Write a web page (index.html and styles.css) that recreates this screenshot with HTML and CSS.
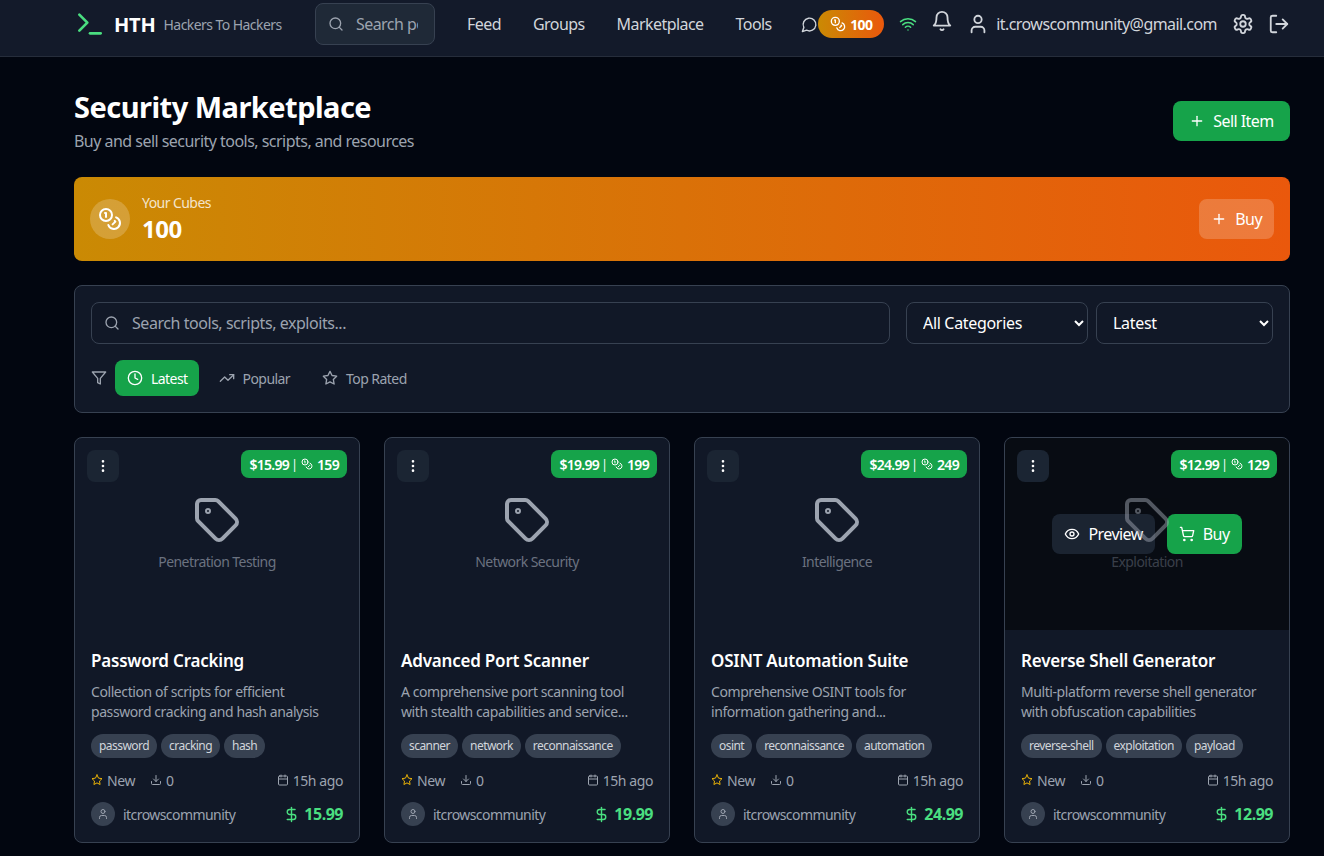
FILE: index.html
```html
<!DOCTYPE html>
<html lang="en">
<head>
    <meta charset="UTF-8">
    <meta name="viewport" content="width=device-width, initial-scale=1.0">
    <title>Security Marketplace - HTH</title>
    <link rel="stylesheet" href="styles.css">
</head>
<body>
    <!-- icon sprite -->
    <svg class="sprite" xmlns="http://www.w3.org/2000/svg">
        <symbol id="i-terminal" viewBox="0 0 24 24"><polyline points="4 17 10 11 4 5"/><line x1="12" y1="19" x2="20" y2="19"/></symbol>
        <symbol id="i-search" viewBox="0 0 24 24"><circle cx="11" cy="11" r="8"/><path d="m21 21-4.3-4.3"/></symbol>
        <symbol id="i-chat" viewBox="0 0 24 24"><path d="M7.9 20A9 9 0 1 0 4 16.1L2 22Z"/></symbol>
        <symbol id="i-coins" viewBox="0 0 24 24"><circle cx="8" cy="8" r="6"/><path d="M18.09 10.37A6 6 0 1 1 10.34 18"/><path d="M7 6h1v4"/><path d="m16.71 13.88.7.71-2.82 2.82"/></symbol>
        <symbol id="i-wifi" viewBox="0 0 24 24"><path d="M12 20h.01"/><path d="M2 8.82a15 15 0 0 1 20 0"/><path d="M5 12.859a10 10 0 0 1 14 0"/><path d="M8.5 16.429a5 5 0 0 1 7 0"/></symbol>
        <symbol id="i-bell" viewBox="0 0 24 24"><path d="M6 8a6 6 0 0 1 12 0c0 7 3 9 3 9H3s3-2 3-9"/><path d="M10.3 21a1.94 1.94 0 0 0 3.4 0"/></symbol>
        <symbol id="i-user" viewBox="0 0 24 24"><path d="M19 21v-2a4 4 0 0 0-4-4H9a4 4 0 0 0-4 4v2"/><circle cx="12" cy="7" r="4"/></symbol>
        <symbol id="i-settings" viewBox="0 0 24 24"><path d="M12.22 2h-.44a2 2 0 0 0-2 2v.18a2 2 0 0 1-1 1.73l-.43.25a2 2 0 0 1-2 0l-.15-.08a2 2 0 0 0-2.73.73l-.22.38a2 2 0 0 0 .73 2.73l.15.1a2 2 0 0 1 1 1.72v.51a2 2 0 0 1-1 1.74l-.15.09a2 2 0 0 0-.73 2.73l.22.38a2 2 0 0 0 2.73.73l.15-.08a2 2 0 0 1 2 0l.43.25a2 2 0 0 1 1 1.73V20a2 2 0 0 0 2 2h.44a2 2 0 0 0 2-2v-.18a2 2 0 0 1 1-1.73l.43-.25a2 2 0 0 1 2 0l.15.08a2 2 0 0 0 2.73-.73l.22-.39a2 2 0 0 0-.73-2.73l-.15-.08a2 2 0 0 1-1-1.74v-.5a2 2 0 0 1 1-1.74l.15-.09a2 2 0 0 0 .73-2.73l-.22-.38a2 2 0 0 0-2.73-.73l-.15.08a2 2 0 0 1-2 0l-.43-.25a2 2 0 0 1-1-1.73V4a2 2 0 0 0-2-2z"/><circle cx="12" cy="12" r="3"/></symbol>
        <symbol id="i-logout" viewBox="0 0 24 24"><path d="M9 21H5a2 2 0 0 1-2-2V5a2 2 0 0 1 2-2h4"/><polyline points="16 17 21 12 16 7"/><line x1="21" y1="12" x2="9" y2="12"/></symbol>
        <symbol id="i-plus" viewBox="0 0 24 24"><path d="M5 12h14"/><path d="M12 5v14"/></symbol>
        <symbol id="i-filter" viewBox="0 0 24 24"><polygon points="22 3 2 3 10 12.46 10 19 14 21 14 12.46 22 3"/></symbol>
        <symbol id="i-clock" viewBox="0 0 24 24"><circle cx="12" cy="12" r="10"/><polyline points="12 6 12 12 16 14"/></symbol>
        <symbol id="i-trending" viewBox="0 0 24 24"><polyline points="22 7 13.5 15.5 8.5 10.5 2 17"/><polyline points="16 7 22 7 22 13"/></symbol>
        <symbol id="i-star" viewBox="0 0 24 24"><polygon points="12 2 15.09 8.26 22 9.27 17 14.14 18.18 21.02 12 17.77 5.82 21.02 7 14.14 2 9.27 8.91 8.26 12 2"/></symbol>
        <symbol id="i-more" viewBox="0 0 24 24"><circle cx="12" cy="12" r="1"/><circle cx="12" cy="5" r="1"/><circle cx="12" cy="19" r="1"/></symbol>
        <symbol id="i-tag" viewBox="0 0 24 24"><path d="M12.586 2.586A2 2 0 0 0 11.172 2H4a2 2 0 0 0-2 2v7.172a2 2 0 0 0 .586 1.414l8.704 8.704a2.426 2.426 0 0 0 3.42 0l6.58-6.58a2.426 2.426 0 0 0 0-3.42z"/><circle cx="7.5" cy="7.5" r=".5"/></symbol>
        <symbol id="i-eye" viewBox="0 0 24 24"><path d="M2 12s3-7 10-7 10 7 10 7-3 7-10 7-10-7-10-7Z"/><circle cx="12" cy="12" r="3"/></symbol>
        <symbol id="i-cart" viewBox="0 0 24 24"><circle cx="8" cy="21" r="1"/><circle cx="19" cy="21" r="1"/><path d="M2.05 2.05h2l2.66 12.42a2 2 0 0 0 2 1.58h9.78a2 2 0 0 0 1.95-1.57l1.65-7.43H5.12"/></symbol>
        <symbol id="i-download" viewBox="0 0 24 24"><path d="M21 15v4a2 2 0 0 1-2 2H5a2 2 0 0 1-2-2v-4"/><polyline points="7 10 12 15 17 10"/><line x1="12" y1="15" x2="12" y2="3"/></symbol>
        <symbol id="i-calendar" viewBox="0 0 24 24"><path d="M8 2v4"/><path d="M16 2v4"/><rect x="3" y="4" width="18" height="18" rx="2"/><path d="M3 10h18"/></symbol>
        <symbol id="i-dollar" viewBox="0 0 24 24"><line x1="12" y1="2" x2="12" y2="22"/><path d="M17 5H9.5a3.5 3.5 0 0 0 0 7h5a3.5 3.5 0 0 1 0 7H6"/></symbol>
    </svg>

    <header class="topbar">
        <a class="logo" href="#">
            <svg class="icon logo-icon"><use href="#i-terminal"/></svg>
            <span class="logo-name">HTH</span>
            <span class="logo-sub">Hackers To Hackers</span>
        </a>
        <div class="top-search">
            <svg class="icon icon-16"><use href="#i-search"/></svg>
            <input type="text" placeholder="Search posts...">
        </div>
        <nav class="nav-links">
            <a href="#">Feed</a>
            <a href="#">Groups</a>
            <a href="#">Marketplace</a>
            <a href="#">Tools</a>
        </nav>
        <div class="top-actions">
            <svg class="icon icon-chat"><use href="#i-chat"/></svg>
            <span class="cube-pill"><svg class="icon icon-16"><use href="#i-coins"/></svg>100</span>
            <svg class="icon icon-wifi"><use href="#i-wifi"/></svg>
            <svg class="icon icon-bell"><use href="#i-bell"/></svg>
            <span class="top-user"><svg class="icon icon-user"><use href="#i-user"/></svg>it.crowscommunity@gmail.com</span>
            <svg class="icon icon-gear"><use href="#i-settings"/></svg>
            <svg class="icon icon-exit"><use href="#i-logout"/></svg>
        </div>
    </header>

    <main class="container">
        <div class="page-head">
            <div>
                <h1>Security Marketplace</h1>
                <p>Buy and sell security tools, scripts, and resources</p>
            </div>
            <button class="btn btn-green btn-sell"><svg class="icon icon-16"><use href="#i-plus"/></svg>Sell Item</button>
        </div>

        <section class="cubes">
            <div class="cubes-left">
                <span class="cubes-circle"><svg class="icon icon-24"><use href="#i-coins"/></svg></span>
                <div>
                    <div class="cubes-label">Your Cubes</div>
                    <div class="cubes-count">100</div>
                </div>
            </div>
            <button class="btn btn-glass"><svg class="icon icon-16"><use href="#i-plus"/></svg>Buy</button>
        </section>

        <section class="filters">
            <div class="filter-row">
                <div class="filter-search">
                    <svg class="icon icon-16"><use href="#i-search"/></svg>
                    <input type="text" placeholder="Search tools, scripts, exploits...">
                </div>
                <select class="select-cat"><option>All Categories</option></select>
                <select class="select-sort"><option>Latest</option></select>
            </div>
            <div class="tab-row">
                <svg class="icon icon-filter"><use href="#i-filter"/></svg>
                <button class="tab active"><svg class="icon icon-16"><use href="#i-clock"/></svg>Latest</button>
                <button class="tab"><svg class="icon icon-16"><use href="#i-trending"/></svg>Popular</button>
                <button class="tab"><svg class="icon icon-16"><use href="#i-star"/></svg>Top Rated</button>
            </div>
        </section>

        <section class="grid">
            <article class="card">
                <div class="thumb">
                    <button class="menu-btn"><svg class="icon icon-16"><use href="#i-more"/></svg></button>
                    <span class="price-badge">$15.99 <i>|</i> <svg class="icon icon-12"><use href="#i-coins"/></svg> 159</span>
                    <svg class="icon tag-icon"><use href="#i-tag"/></svg>
                    <span class="thumb-label">Penetration Testing</span>
                </div>
                <div class="card-body">
                    <h3>Password Cracking</h3>
                    <p class="desc">Collection of scripts for efficient password cracking and hash analysis</p>
                    <div class="tags"><span>password</span><span>cracking</span><span>hash</span></div>
                    <div class="meta">
                        <span class="meta-new"><svg class="icon icon-star"><use href="#i-star"/></svg>New</span>
                        <span class="meta-dl"><svg class="icon icon-12"><use href="#i-download"/></svg>0</span>
                        <span class="meta-time"><svg class="icon icon-12"><use href="#i-calendar"/></svg>15h ago</span>
                    </div>
                    <div class="seller">
                        <span class="avatar"><svg class="icon icon-12"><use href="#i-user"/></svg></span>
                        <span class="seller-name">itcrowscommunity</span>
                        <span class="price"><svg class="icon icon-dollar"><use href="#i-dollar"/></svg>15.99</span>
                    </div>
                </div>
            </article>

            <article class="card">
                <div class="thumb">
                    <button class="menu-btn"><svg class="icon icon-16"><use href="#i-more"/></svg></button>
                    <span class="price-badge">$19.99 <i>|</i> <svg class="icon icon-12"><use href="#i-coins"/></svg> 199</span>
                    <svg class="icon tag-icon"><use href="#i-tag"/></svg>
                    <span class="thumb-label">Network Security</span>
                </div>
                <div class="card-body">
                    <h3>Advanced Port Scanner</h3>
                    <p class="desc">A comprehensive port scanning tool with stealth capabilities and service...</p>
                    <div class="tags"><span>scanner</span><span>network</span><span>reconnaissance</span></div>
                    <div class="meta">
                        <span class="meta-new"><svg class="icon icon-star"><use href="#i-star"/></svg>New</span>
                        <span class="meta-dl"><svg class="icon icon-12"><use href="#i-download"/></svg>0</span>
                        <span class="meta-time"><svg class="icon icon-12"><use href="#i-calendar"/></svg>15h ago</span>
                    </div>
                    <div class="seller">
                        <span class="avatar"><svg class="icon icon-12"><use href="#i-user"/></svg></span>
                        <span class="seller-name">itcrowscommunity</span>
                        <span class="price"><svg class="icon icon-dollar"><use href="#i-dollar"/></svg>19.99</span>
                    </div>
                </div>
            </article>

            <article class="card">
                <div class="thumb">
                    <button class="menu-btn"><svg class="icon icon-16"><use href="#i-more"/></svg></button>
                    <span class="price-badge">$24.99 <i>|</i> <svg class="icon icon-12"><use href="#i-coins"/></svg> 249</span>
                    <svg class="icon tag-icon"><use href="#i-tag"/></svg>
                    <span class="thumb-label">Intelligence</span>
                </div>
                <div class="card-body">
                    <h3>OSINT Automation Suite</h3>
                    <p class="desc">Comprehensive OSINT tools for information gathering and...</p>
                    <div class="tags"><span>osint</span><span>reconnaissance</span><span>automation</span></div>
                    <div class="meta">
                        <span class="meta-new"><svg class="icon icon-star"><use href="#i-star"/></svg>New</span>
                        <span class="meta-dl"><svg class="icon icon-12"><use href="#i-download"/></svg>0</span>
                        <span class="meta-time"><svg class="icon icon-12"><use href="#i-calendar"/></svg>15h ago</span>
                    </div>
                    <div class="seller">
                        <span class="avatar"><svg class="icon icon-12"><use href="#i-user"/></svg></span>
                        <span class="seller-name">itcrowscommunity</span>
                        <span class="price"><svg class="icon icon-dollar"><use href="#i-dollar"/></svg>24.99</span>
                    </div>
                </div>
            </article>

            <article class="card">
                <div class="thumb">
                    <!-- hover state -->
                    <div class="thumb-overlay">
                        <button class="btn btn-dark"><svg class="icon icon-16"><use href="#i-eye"/></svg>Preview</button>
                        <button class="btn btn-green"><svg class="icon icon-16"><use href="#i-cart"/></svg>Buy</button>
                    </div>
                    <svg class="icon tag-icon dimmed"><use href="#i-tag"/></svg>
                    <span class="thumb-label dimmed">Exploitation</span>
                    <button class="menu-btn"><svg class="icon icon-16"><use href="#i-more"/></svg></button>
                    <span class="price-badge">$12.99 <i>|</i> <svg class="icon icon-12"><use href="#i-coins"/></svg> 129</span>
                </div>
                <div class="card-body">
                    <h3>Reverse Shell Generator</h3>
                    <p class="desc">Multi-platform reverse shell generator with obfuscation capabilities</p>
                    <div class="tags"><span>reverse-shell</span><span>exploitation</span><span>payload</span></div>
                    <div class="meta">
                        <span class="meta-new"><svg class="icon icon-star"><use href="#i-star"/></svg>New</span>
                        <span class="meta-dl"><svg class="icon icon-12"><use href="#i-download"/></svg>0</span>
                        <span class="meta-time"><svg class="icon icon-12"><use href="#i-calendar"/></svg>15h ago</span>
                    </div>
                    <div class="seller">
                        <span class="avatar"><svg class="icon icon-12"><use href="#i-user"/></svg></span>
                        <span class="seller-name">itcrowscommunity</span>
                        <span class="price"><svg class="icon icon-dollar"><use href="#i-dollar"/></svg>12.99</span>
                    </div>
                </div>
            </article>
        </section>
    </main>
</body>
</html>
```
FILE: styles.css
```css
* {
    box-sizing: border-box;
}
html {
    color-scheme: dark;
}
body {
    margin: 0;
    height: 856px;
    overflow: hidden;
    font-family: "Noto Sans", "Open Sans", Arial, sans-serif;
    letter-spacing: -0.035em;
    background: #020610;
    color: #fff;
}
button, input, select {
    font: inherit;
    letter-spacing: inherit;
}
.sprite {
    display: none;
}
.icon {
    flex: none;
    display: block;
    width: 16px;
    height: 16px;
    fill: none;
    stroke: currentColor;
    stroke-width: 2;
    stroke-linecap: round;
    stroke-linejoin: round;
}
.icon-12 { width: 12px; height: 12px; }
.icon-16 { width: 16px; height: 16px; }
.icon-24 { width: 24px; height: 24px; }

/* top bar */
.topbar {
    display: flex;
    align-items: center;
    height: 57px;
    padding: 0 34px 8px 74px;
    background: #131a2a;
    border-bottom: 1px solid #262d3b;
}
.logo {
    display: flex;
    align-items: center;
    width: 241px;
    color: #fff;
    text-decoration: none;
}
.logo-icon {
    width: 32px;
    height: 32px;
    color: #4ade80;
}
.logo-name {
    margin-left: 8px;
    font-size: 20px;
    font-weight: 700;
    letter-spacing: -0.01em;
}
.logo-sub {
    margin-left: 8px;
    font-size: 14px;
    color: #9ca3af;
}
.top-search {
    display: flex;
    align-items: center;
    gap: 12px;
    width: 120px;
    height: 42px;
    padding: 0 16px 0 12px;
    background: #1f2937;
    border: 1px solid #374151;
    border-radius: 8px;
    color: #9ca3af;
}
.top-search input {
    width: 100%;
    min-width: 0;
    padding: 0;
    background: none;
    border: none;
    outline: none;
    color: #fff;
}
input::placeholder {
    color: #9ca3af;
    opacity: 1;
}
.nav-links {
    display: flex;
    gap: 32px;
    margin-left: 32px;
}
.nav-links a {
    color: #d1d5db;
    text-decoration: none;
}
.top-actions {
    display: flex;
    align-items: center;
    flex: 1;
    justify-content: flex-end;
    color: #d1d5db;
}
.icon-chat {
    width: 17px;
    height: 17px;
}
.cube-pill {
    display: flex;
    align-items: center;
    gap: 4px;
    height: 28px;
    padding: 0 12px;
    border-radius: 14px;
    background: linear-gradient(90deg, #ca8a04, #ea580c);
    color: #fff;
    font-size: 14px;
    font-weight: 700;
    letter-spacing: -0.05em;
}
.icon-wifi {
    width: 18px;
    height: 18px;
    margin-left: 15px;
    color: #4ade80;
}
.icon-bell {
    width: 22px;
    height: 22px;
    margin: -6px 0 0 14px;
}
.top-user {
    display: flex;
    align-items: center;
    gap: 7px;
    margin-left: 14px;
}
.icon-user {
    width: 22px;
    height: 22px;
}
.icon-gear {
    width: 22px;
    height: 22px;
    margin-left: 15px;
}
.icon-exit {
    width: 22px;
    height: 22px;
    margin-left: 14px;
}

/* page */
.container {
    padding: 32px 34px 0 74px;
}
.page-head {
    display: flex;
    justify-content: space-between;
    align-items: center;
    margin-bottom: 24px;
}
h1 {
    margin: 0 0 4px;
    font-size: 29px;
    line-height: 36px;
    font-weight: 700;
    letter-spacing: -0.018em;
}
.page-head p {
    margin: 0;
    line-height: 24px;
    letter-spacing: -0.033em;
    color: #9ca3af;
}
.btn {
    display: inline-flex;
    align-items: center;
    justify-content: center;
    gap: 8px;
    height: 40px;
    padding: 0 12px;
    border: none;
    border-radius: 8px;
    white-space: nowrap;
    color: #fff;
    cursor: pointer;
}
.btn-green {
    background: #16a34a;
}
.btn-sell {
    width: 117px;
}
.btn-glass {
    background: rgba(255, 255, 255, 0.2);
}
.btn-dark {
    background: rgba(31, 41, 55, 0.85);
}

/* cubes banner */
.cubes {
    display: flex;
    justify-content: space-between;
    align-items: center;
    height: 84px;
    padding: 0 16px;
    margin-bottom: 24px;
    border-radius: 8px;
    background: linear-gradient(90deg, #ca8a04, #ea580c);
}
.cubes-left {
    display: flex;
    align-items: center;
    gap: 12px;
}
.cubes-circle {
    display: flex;
    align-items: center;
    justify-content: center;
    width: 40px;
    height: 40px;
    border-radius: 50%;
    background: rgba(255, 255, 255, 0.2);
}
.cubes-label {
    font-size: 14px;
    line-height: 20px;
    color: rgba(255, 255, 255, 0.8);
}
.cubes-count {
    font-size: 24px;
    line-height: 32px;
    font-weight: 700;
    letter-spacing: -0.02em;
}

/* filters */
.filters {
    height: 128px;
    padding: 16px;
    margin-bottom: 24px;
    background: #111827;
    border: 1px solid #374151;
    border-radius: 8px;
}
.filter-row {
    display: flex;
    height: 42px;
    margin-bottom: 16px;
}
.filter-search {
    display: flex;
    align-items: center;
    gap: 12px;
    flex: 1;
    padding: 0 12px;
    margin-right: 16px;
    border: 1px solid #374151;
    border-radius: 8px;
    color: #9ca3af;
}
.filter-search input {
    flex: 1;
    padding: 0;
    background: none;
    border: none;
    outline: none;
    letter-spacing: -0.028em;
    color: #fff;
}
.filters select {
    height: 42px;
    padding: 0 12px;
    background: #111827;
    border: 1px solid #374151;
    border-radius: 8px;
    letter-spacing: -0.02em;
    color: #fff;
}
.select-cat {
    width: 182px;
    margin-right: 8px;
}
.select-sort {
    width: 177px;
}
.tab-row {
    display: flex;
    align-items: center;
}
.icon-filter {
    width: 16px;
    height: 16px;
    margin-right: 8px;
    color: #9ca3af;
}
.tab {
    display: flex;
    align-items: center;
    gap: 8px;
    height: 36px;
    padding: 0 12px;
    background: none;
    border: none;
    border-radius: 8px;
    font-size: 14px;
    letter-spacing: -0.04em;
    color: #9ca3af;
}
.tab.active {
    padding-right: 11px;
    background: #16a34a;
    color: #fff;
}
.tab + .tab {
    margin-left: 8px;
}

/* cards */
.grid {
    display: grid;
    grid-template-columns: repeat(4, 1fr);
    gap: 24px;
}
.card {
    overflow: hidden;
    background: #111827;
    border: 1px solid #374151;
    border-radius: 8px;
}
.thumb {
    position: relative;
    display: flex;
    flex-direction: column;
    align-items: center;
    justify-content: center;
    height: 192px;
}
.tag-icon {
    width: 48px;
    height: 48px;
    margin-bottom: 8px;
    color: #9ca3af;
}
.thumb-label {
    font-size: 14px;
    line-height: 20px;
    color: #6b7280;
}
.thumb-overlay {
    position: absolute;
    inset: 0;
    display: flex;
    align-items: center;
    justify-content: center;
    gap: 12px;
    background: rgba(0, 0, 0, 0.5);
}
/* icon and label under the hover overlay */
.dimmed {
    position: relative;
    opacity: 0.5;
    pointer-events: none;
}
.menu-btn {
    position: absolute;
    top: 12px;
    left: 12px;
    display: flex;
    align-items: center;
    justify-content: center;
    width: 32px;
    height: 32px;
    padding: 0;
    background: #1b2533;
    border: none;
    border-radius: 8px;
    color: #fff;
}
.price-badge {
    position: absolute;
    top: 12px;
    right: 12px;
    display: flex;
    align-items: center;
    gap: 4px;
    height: 28px;
    padding: 0 8px;
    background: #16a34a;
    border-radius: 8px;
    font-size: 14px;
    font-weight: 600;
    letter-spacing: -0.05em;
}
.price-badge i {
    margin-left: -2px;
    font-style: normal;
    font-weight: 400;
    font-size: 12px;
}
.card-body {
    padding: 16px;
}
.card-body h3 {
    margin: 0 0 6px;
    font-size: 17px;
    line-height: 30px;
    font-weight: 600;
    letter-spacing: -0.012em;
}
.desc {
    height: 40px;
    margin: 0 0 12px;
    padding-right: 12px;
    font-size: 14px;
    line-height: 20px;
    letter-spacing: -0.03em;
    color: #9ca3af;
}
.tags {
    display: flex;
    gap: 4px;
    margin-bottom: 12px;
}
.tags span {
    height: 24px;
    padding: 0 8px;
    border-radius: 12px;
    background: #374151;
    font-size: 12px;
    line-height: 24px;
    letter-spacing: -0.045em;
    color: #d1d5db;
}
.meta {
    display: flex;
    align-items: center;
    height: 20px;
    margin-bottom: 12px;
    font-size: 14px;
    letter-spacing: -0.03em;
    color: #9ca3af;
}
.meta span {
    display: flex;
    align-items: center;
    gap: 4px;
}
.icon-star {
    width: 12px;
    height: 12px;
    color: #eab308;
}
.meta-dl {
    margin-left: 15px;
}
.meta-time {
    margin-left: auto;
}
.seller {
    display: flex;
    align-items: center;
    gap: 8px;
    height: 24px;
}
.avatar {
    display: flex;
    align-items: center;
    justify-content: center;
    width: 24px;
    height: 24px;
    border-radius: 50%;
    background: #374151;
    color: #9ca3af;
}
.seller-name {
    font-size: 14px;
    color: #9ca3af;
}
.price {
    display: flex;
    align-items: center;
    gap: 4px;
    margin-left: auto;
    font-size: 16px;
    font-weight: 700;
    letter-spacing: -0.03em;
    color: #4ade80;
}
.icon-dollar {
    width: 17px;
    height: 17px;
}
```
